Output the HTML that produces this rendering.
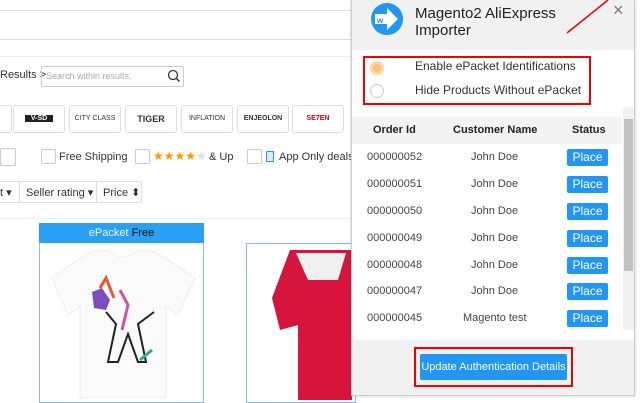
<!DOCTYPE html>
<html><head><meta charset="utf-8"><style>
*{margin:0;padding:0;box-sizing:border-box}
body{width:640px;height:400px;overflow:hidden;background:#fff;font-family:"Liberation Sans",Arial,sans-serif;position:relative}
.a{position:absolute}
.logo{position:absolute;top:105px;width:52px;height:28px;border:1px solid #ddd;border-radius:3px;background:#fff;font-size:7px;text-align:center;line-height:26px;color:#333}
.cb{position:absolute;width:15px;height:15px;border:1px solid #ccc;border-radius:2px;background:#fff}
.t{font-size:11px;color:#333}
.row{position:absolute;left:352px;width:270px;height:27px;font-size:11px;color:#444}
.row span{position:absolute;top:7px}
.pl{position:absolute;left:215px;top:5px;width:41px;height:17px;background:#2196f3;color:#fff;font-size:12px;text-align:center;line-height:17px;border-radius:2px}
</style></head><body>
<div class="a" style="left:0;top:10px;width:352px;height:1px;background:#ddd"></div>
<div class="a" style="left:0;top:39px;width:352px;height:1px;background:#ddd"></div>
<div class="a" style="left:0;top:56px;width:352px;height:1px;background:#eee"></div>
<div class="a t" style="left:0;top:69px;font-size:11px">Results &gt;</div>
<div class="a" style="left:41px;top:66px;width:143px;height:21px;border:1px solid #ccc;border-radius:2px;font-size:9px;color:#aaa;padding:4px 4px">Search within results.</div>
<svg class="a" style="left:167px;top:69px" width="14" height="14"><circle cx="6" cy="6" r="4.5" fill="none" stroke="#333" stroke-width="1.3"/><line x1="9.5" y1="9.5" x2="12.5" y2="12.5" stroke="#333" stroke-width="1.5"/></svg>
<div class="logo" style="left:-40px"></div>
<div class="logo" style="left:13px"><b style="background:#222;color:#fff;padding:0 6px">V-SD</b></div>
<div class="logo" style="left:69px">CITY CLASS</div>
<div class="logo" style="left:125px;font-weight:bold;font-size:9px">TIGER</div>
<div class="logo" style="left:181px">INFLATION</div>
<div class="logo" style="left:237px;font-weight:bold">ENJEOLON</div>
<div class="logo" style="left:292px;color:#c00;font-weight:bold">SE7EN</div>
<div class="cb" style="left:0;top:148px;width:16px;height:18px"></div>
<div class="cb" style="left:41px;top:149px"></div><div class="a t" style="left:59px;top:151px">Free Shipping</div>
<div class="cb" style="left:135px;top:149px"></div><div class="a" style="left:153px;top:149px;color:#f90;font-size:12px">★★★★<span style="color:#ddd">★</span></div><div class="a t" style="left:209px;top:151px">&amp; Up</div>
<div class="cb" style="left:247px;top:149px"></div><div class="a" style="left:266px;top:151px;width:8px;height:11px;border:1px solid #2196f3;border-radius:1px;background:#dbeafe"></div><div class="a t" style="left:279px;top:151px">App Only deals</div>
<div class="a" style="left:-5px;top:181px;width:147px;height:22px;border:1px solid #ddd;border-radius:2px"></div>
<div class="a t" style="left:0;top:186px">t ▾</div>
<div class="a" style="left:19px;top:182px;width:1px;height:20px;background:#ddd"></div>
<div class="a t" style="left:26px;top:186px">Seller rating ▾</div>
<div class="a" style="left:96px;top:182px;width:1px;height:20px;background:#ddd"></div>
<div class="a t" style="left:103px;top:186px">Price ⬍</div>
<div class="a" style="left:0;top:218px;width:352px;height:1px;background:#eee"></div>
<div class="a" style="left:39px;top:223px;width:165px;height:180px;border:1px solid #8ab8f5"></div>
<div class="a" style="left:39px;top:223px;width:165px;height:20px;background:#2aa0f5;color:#e8f4ff;font-size:11px;text-align:center;line-height:20px">ePacket <b style="color:#111;font-weight:normal">Free</b></div>
<svg class="a" style="left:50px;top:250px" width="146" height="148"><path d="M40 2 L58 0 Q73 14 88 0 L106 2 L145 28 L128 65 L116 56 L116 148 L30 148 L30 56 L18 65 L2 28 Z" fill="#fbfbfb" stroke="#eee"/><path d="M42 42 L52 38 L60 50 L56 60 L44 58 Z" fill="#7c4dbf"/><path d="M50 38 L56 28 L64 48" fill="none" stroke="#e53" stroke-width="3"/><path d="M70 40 L78 55 L72 80" fill="none" stroke="#c5a" stroke-width="3"/><path d="M56 62 L66 74 L58 112 L68 112 L78 84 L88 112 L96 112 L88 74 L104 62" fill="none" stroke="#222" stroke-width="2"/><path d="M90 110 L102 100" stroke="#3a8" stroke-width="3"/></svg>
<div class="a" style="left:246px;top:243px;width:110px;height:160px;border:1px solid #8ab8f5"></div>
<svg class="a" style="left:268px;top:250px" width="84" height="150"><path d="M22 0 L84 0 L84 150 L30 150 L30 75 L12 80 L4 48 Z" fill="#d7153c"/><path d="M28 3 L78 3 L70 30 L40 30 Z" fill="#f0f0f0"/></svg>
<!-- popup -->
<div class="a" style="left:351px;top:0;width:284px;height:396px;background:#fff;border:1px solid #ccc;box-shadow:0 0 3px rgba(0,0,0,.2)"></div>
<div class="a" style="left:352px;top:0;width:282px;height:50px;background:#f1f1f1"></div>
<svg class="a" style="left:371px;top:3px" width="32" height="32"><circle cx="16" cy="16" r="16" fill="#2196f3"/><path d="M4 11 H16 V5 L27 16 L16 27 V21 H4 Z" fill="#fff"/><text x="6" y="20" font-size="8" font-family="Liberation Sans" fill="#2196f3" font-weight="bold">w</text></svg>
<div class="a" style="left:415px;top:5px;font-size:15px;color:#222;line-height:17px">Magento2 AliExpress<br>Importer</div>
<div class="a" style="left:613px;top:0;font-size:18px;color:#777">×</div>
<svg class="a" style="left:560px;top:0" width="50" height="40"><line x1="7" y1="33" x2="48" y2="0" stroke="#e00" stroke-width="1.5"/></svg>
<div class="a" style="left:363px;top:56px;width:228px;height:49px;border:2px solid #e00"></div>
<div class="a" style="left:370px;top:61px;width:14px;height:14px;border-radius:50%;background:#fbbf77;box-shadow:inset 0 0 0 3px #fcd9a9"></div>
<div class="a" style="left:370px;top:84px;width:14px;height:14px;border-radius:50%;border:1px solid #ccc"></div>
<div class="a" style="left:415px;top:59px;font-size:12px;color:#333">Enable ePacket Identifications</div>
<div class="a" style="left:415px;top:83px;font-size:12px;color:#333">Hide Products Without ePacket</div>
<div class="a" style="left:352px;top:117px;width:270px;height:27px;background:#f3f3f3"></div>
<div class="a" style="left:373px;top:124px;font-size:11px;font-weight:bold;color:#222">Order Id</div>
<div class="a" style="left:453px;top:124px;font-size:11px;font-weight:bold;color:#222">Customer Name</div>
<div class="a" style="left:572px;top:124px;font-size:11px;font-weight:bold;color:#222">Status</div>
<div class="a" style="left:623px;top:107px;width:11px;height:223px;background:#f1f1f1"></div>
<div class="a" style="left:624px;top:119px;width:9px;height:152px;background:#c1c1c1"></div>
<div class="row" style="top:144px"><span style="left:15px">000000052</span><span style="left:119px">John Doe</span><div class="pl">Place</div></div>
<div class="row" style="top:171px"><span style="left:15px">000000051</span><span style="left:119px">John Doe</span><div class="pl">Place</div></div>
<div class="row" style="top:198px"><span style="left:15px">000000050</span><span style="left:119px">John Doe</span><div class="pl">Place</div></div>
<div class="row" style="top:225px"><span style="left:15px">000000049</span><span style="left:119px">John Doe</span><div class="pl">Place</div></div>
<div class="row" style="top:252px"><span style="left:15px">000000048</span><span style="left:119px">John Doe</span><div class="pl">Place</div></div>
<div class="row" style="top:278px"><span style="left:15px">000000047</span><span style="left:119px">John Doe</span><div class="pl">Place</div></div>
<div class="row" style="top:305px"><span style="left:15px">000000045</span><span style="left:111px">Magento test</span><div class="pl">Place</div></div>
<div class="a" style="left:352px;top:340px;width:282px;height:55px;background:#f1f1f1"></div>
<div class="a" style="left:414px;top:347px;width:159px;height:40px;border:2px solid #e00"></div>
<div class="a" style="left:420px;top:354px;width:147px;height:26px;background:#2196f3;color:#fff;font-size:11px;text-align:center;line-height:26px;border-radius:2px">Update Authentication Details</div>
</body></html>
